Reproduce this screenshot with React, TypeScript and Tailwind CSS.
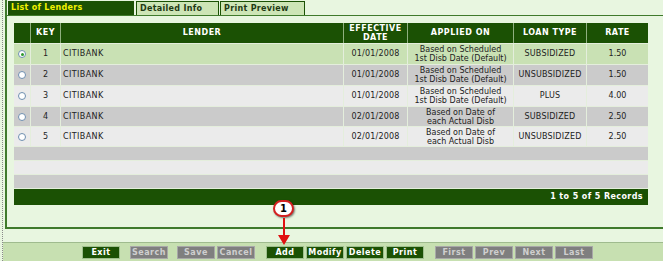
import React from 'react';

type Row = { key: number; date: string; applied: [string, string]; type: string; rate: string };

const rows: Row[] = [
  { key: 1, date: '01/01/2008', applied: ['Based on Scheduled', '1st Disb Date (Default)'], type: 'SUBSIDIZED', rate: '1.50' },
  { key: 2, date: '01/01/2008', applied: ['Based on Scheduled', '1st Disb Date (Default)'], type: 'UNSUBSIDIZED', rate: '1.50' },
  { key: 3, date: '01/01/2008', applied: ['Based on Scheduled', '1st Disb Date (Default)'], type: 'PLUS', rate: '4.00' },
  { key: 4, date: '02/01/2008', applied: ['Based on Date of', 'each Actual Disb'], type: 'SUBSIDIZED', rate: '2.50' },
  { key: 5, date: '02/01/2008', applied: ['Based on Date of', 'each Actual Disb'], type: 'UNSUBSIDIZED', rate: '2.50' },
];

const rowBg = ['bg-[#c9e1b4]', 'bg-[#cbcbcb]', 'bg-[#ebebeb]', 'bg-[#cbcbcb]', 'bg-[#ebebeb]'];
const rowH = ['h-[21px]', 'h-[21px]', 'h-[21px]', 'h-[20px]', 'h-[20px]'];

function Radio({ checked }: { checked?: boolean }) {
  return (
    <span className="flex h-[8px] w-[8px] items-center justify-center rounded-full border border-[#6f8fb0] bg-white">
      {checked && <span className="h-[3px] w-[3px] rounded-full bg-[#2e9a2e]" />}
    </span>
  );
}

function Btn({ label, on }: { label: string; on?: boolean }) {
  return (
    <div
      className={
        'flex h-[13px] w-[38px] items-center justify-center border text-[8px] font-bold leading-none tracking-[0.5px] ' +
        (on
          ? 'border-[#9fbf8e] bg-[#1b5104] text-white'
          : 'border-[#a8a8a8] bg-[#7f7f7f] text-[#cfcfcf]')
      }
    >
      {label}
    </div>
  );
}

export default function App() {
  return (
    <div
      className="relative flex h-[261px] w-[663px] overflow-hidden bg-[#e8f6e0] text-[8px]"
      style={{ fontFamily: '"DejaVu Sans", Verdana, sans-serif' }}
    >
      <div className="ml-[2px] h-full border-l border-dotted border-[#8a8a8a]" />
      <div className="flex flex-1 flex-col">
        {/* panel */}
        <div className="ml-[2px] flex h-[229px] flex-col border-b-2 border-l-2 border-[#3f7a2c]">
          <div className="flex h-[16px] items-end border-b border-[#3f7a2c] pl-[1px]">
            <div className="flex h-[14px] w-[126px] items-center bg-[#1b5104] pl-[3px] font-bold tracking-[0.3px] text-[#f2f200]">
              List of Lenders
            </div>
            <div className="ml-[2px] flex h-[14px] w-[83px] items-center border border-b-0 border-[#1b5104] bg-[#cde5b6] pl-[3px] font-bold tracking-[0.3px] text-[#1f3a14]">
              Detailed Info
            </div>
            <div className="ml-[1px] flex h-[14px] w-[85px] items-center border border-b-0 border-[#1b5104] bg-[#cde5b6] pl-[3px] font-bold tracking-[0.3px] text-[#1f3a14]">
              Print Preview
            </div>
          </div>

          <div className="pl-[7px] pt-[7px]">
            <div className="w-[634px]">
              {/* header */}
              <div className="flex h-[20px] bg-[#1b5104] font-bold tracking-[0.5px] text-white">
                <div className="w-[17px] border-r border-[#8fb07f]" />
                <div className="flex w-[30px] items-center justify-center border-r border-[#8fb07f]">KEY</div>
                <div className="flex w-[283px] items-center justify-center border-r border-[#8fb07f]">LENDER</div>
                <div className="flex w-[64px] flex-col items-center justify-center border-r border-[#8fb07f] leading-[9px]">
                  <span>EFFECTIVE</span>
                  <span>DATE</span>
                </div>
                <div className="flex w-[106px] items-center justify-center border-r border-[#8fb07f]">APPLIED ON</div>
                <div className="flex w-[73px] items-center justify-center border-r border-[#8fb07f]">LOAN TYPE</div>
                <div className="flex flex-1 items-center justify-center">RATE</div>
              </div>

              {rows.map((r, i) => (
                <div key={r.key} className={'flex border-t border-[#e4eedc] text-[#222] ' + rowBg[i] + ' ' + rowH[i]}>
                  <div className="flex w-[17px] items-center justify-center border-r border-[#e4eedc]">
                    <Radio checked={i === 0} />
                  </div>
                  <div className="flex w-[30px] items-center justify-center border-r border-[#e4eedc]">{r.key}</div>
                  <div className="flex w-[283px] items-center border-r border-[#e4eedc] pl-[2px] tracking-[0.4px]">CITIBANK</div>
                  <div className="flex w-[64px] items-center justify-center border-r border-[#e4eedc] tracking-[0.2px]">{r.date}</div>
                  <div className="flex w-[106px] flex-col items-center justify-center border-r border-[#e4eedc] leading-[9px]">
                    <span>{r.applied[0]}</span>
                    <span>{r.applied[1]}</span>
                  </div>
                  <div className="flex w-[73px] items-center justify-center border-r border-[#e4eedc] tracking-[0.2px]">{r.type}</div>
                  <div className="flex flex-1 items-center justify-center">{r.rate}</div>
                </div>
              ))}

              <div className="h-[14px] border-t border-[#e4eedc] bg-[#cbcbcb]" />
              <div className="h-[14px] border-t border-[#e4eedc] bg-[#ebebeb]" />
              <div className="h-[14px] border-t border-[#e4eedc] bg-[#cbcbcb]" />
              <div className="flex h-[17px] items-center justify-end border-t border-[#e4eedc] bg-[#1b5104] pr-[5px] font-bold tracking-[0.4px] text-white">
                1 to 5 of 5 Records
              </div>
            </div>
          </div>
        </div>

        <div className="h-[13px]" />
        {/* button bar */}
        <div className="flex flex-1 items-start border-t border-[#9fbb8e] bg-[#c7e0b1] pl-[79px] pt-[3px]">
          <Btn label="Exit" on />
          <div className="ml-[10px]">
            <Btn label="Search" />
          </div>
          <div className="ml-[9px] flex gap-[2px]">
            <Btn label="Save" />
            <Btn label="Cancel" />
          </div>
          <div className="ml-[11px] flex gap-[2px]">
            <Btn label="Add" on />
            <Btn label="Modify" on />
            <Btn label="Delete" on />
            <Btn label="Print" on />
          </div>
          <div className="ml-[11px] flex gap-[2px]">
            <Btn label="First" />
            <Btn label="Prev" />
            <Btn label="Next" />
            <Btn label="Last" />
          </div>
        </div>
      </div>

      {/* callout annotation */}
      <div className="absolute left-[273px] top-[200px] flex h-[17px] w-[21px] items-center justify-center rounded-full border-2 border-[#d42020] bg-white text-[10px] font-bold text-black shadow-[1px_1px_2px_rgba(0,0,0,0.5)]">
        1
      </div>
      <svg className="absolute left-[278px] top-[218px]" width="12" height="28" viewBox="0 0 12 28">
        <line x1="6" y1="0" x2="6" y2="18" stroke="#e01010" strokeWidth="2" />
        <polygon points="0,17 12,17 6,27" fill="#e01010" />
      </svg>
    </div>
  );
}
